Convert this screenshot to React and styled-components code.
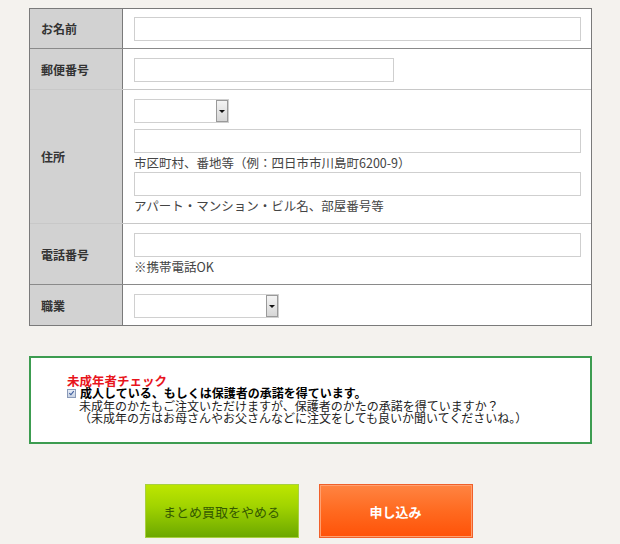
import styled, { createGlobalStyle } from 'styled-components';

const GlobalStyle = createGlobalStyle`
  html, body {
    margin: 0;
    padding: 0;
    background: #f4f2ee;
    font-family: "Noto Sans CJK JP", "Noto Sans", sans-serif;
    color: #333;
  }
`

const SelectBox = ({ width }) => (
    <Select width={width}>
        <Arrow><Tri/></Arrow>
    </Select>
)

export default function App() {
    return (
        <Page>
            <GlobalStyle/>
            <Form>
                <Row>
                    <Label>お名前</Label>
                    <Cell first><Input/></Cell>
                </Row>
                <Row>
                    <Label>郵便番号</Label>
                    <Cell><Input width="260px"/></Cell>
                </Row>
                <Row light>
                    <Label>住所</Label>
                    <Cell>
                        <SelectBox width="95px"/>
                        <Input mt="6px"/>
                        <Note>市区町村、番地等（例：四日市市川島町6200-9）</Note>
                        <Input/>
                        <Note>アパート・マンション・ビル名、部屋番号等</Note>
                    </Cell>
                </Row>
                <Row light>
                    <Label>電話番号</Label>
                    <Cell>
                        <Input/>
                        <Note>※携帯電話OK</Note>
                    </Cell>
                </Row>
                <Row>
                    <Label>職業</Label>
                    <Cell><SelectBox width="145px"/></Cell>
                </Row>
            </Form>

            <CheckBox>
                <CheckTitle>未成年者チェック</CheckTitle>
                <CheckLine>
                    <Tick>
                        <svg width="8" height="8" viewBox="0 0 8 8">
                            <path d="M1.5 4.2 L3.3 6 L6.6 1.8" stroke="#3f5f9f" strokeWidth="1.3" fill="none"/>
                        </svg>
                    </Tick>
                    <strong>成人している、もしくは保護者の承諾を得ています。</strong>
                </CheckLine>
                <SubLine>未成年のかたもご注文いただけますが、保護者のかたの承諾を得ていますか？</SubLine>
                <SubLine>（未成年の方はお母さんやお父さんなどに注文をしても良いか聞いてくださいね。）</SubLine>
            </CheckBox>

            <Buttons>
                <GreenBtn>まとめ買取をやめる</GreenBtn>
                <OrangeBtn>申し込み</OrangeBtn>
            </Buttons>
        </Page>
    )
}

const Page = styled.div`
  padding: 8px 28px 6px 29px;
  width: 563px;
`

const Form = styled.div`
  border: 1px solid #7a7a7a;
  background: #fff;
`

const Row = styled.div`
  display: grid;
  grid-template-columns: 93px 1fr;
  border-top: 1px solid ${p => p.light ? '#c8c8c8' : '#8a8a8a'};
  &:first-child {
    border-top: none;
  }
`

const Label = styled.div`
  background: #d2d2d2;
  border-right: 1px solid #7a7a7a;
  display: flex;
  align-items: center;
  padding-left: 11px;
  font-size: 12px;
  font-weight: bold;
  color: #333;
`

const Cell = styled.div`
  padding: ${p => p.first ? '8px' : '9px'} 10px 7px 11px;
  display: flex;
  flex-direction: column;
  align-items: flex-start;
`

const Input = styled.div`
  box-sizing: border-box;
  width: ${p => p.width || '100%'};
  height: 24px;
  border: 1px solid #cfcfcf;
  background: #fff;
  margin-top: ${p => p.mt || '0'};
`

const Note = styled.div`
  font-size: 12.5px;
  line-height: 17px;
  color: #444;
  margin: 1px 0;
  &:last-child {
    margin-bottom: 2px;
  }
`

const Select = styled.div`
  box-sizing: border-box;
  width: ${p => p.width};
  height: 24px;
  border: 1px solid #d0d0d0;
  background: #fff;
  display: flex;
  justify-content: flex-end;
`

const Arrow = styled.span`
  box-sizing: border-box;
  width: 12px;
  height: 22px;
  border: 1px solid #9a9a9a;
  background: linear-gradient(#f4f4f4, #d6d6d6);
  display: flex;
  align-items: center;
  justify-content: center;
`

const Tri = styled.span`
  width: 0;
  height: 0;
  border-left: 3px solid transparent;
  border-right: 3px solid transparent;
  border-top: 3px solid #111;
`

const CheckBox = styled.div`
  margin-top: 30px;
  border: 2px solid #3c9c50;
  background: #fff;
  height: 88px;
  box-sizing: border-box;
  padding: 16px 0 0 36px;
  font-size: 12px;
  line-height: 12.5px;
  color: #222;
`

const CheckTitle = styled.div`
  color: #e8141c;
  font-weight: bold;
  font-size: 12.5px;
  line-height: 13px;
`

const CheckLine = styled.div`
  display: flex;
  align-items: center;
  gap: 4px;
  color: #000;
  line-height: 12.5px;
`

const Tick = styled.span`
  box-sizing: border-box;
  width: 9px;
  height: 9px;
  border: 1px solid #8a9ab8;
  background: linear-gradient(#e6ecf6, #c8d2e2);
  display: flex;
  align-items: center;
  justify-content: center;
`

const SubLine = styled.div`
  padding-left: 12px;
  line-height: 12.5px;
`

const Buttons = styled.div`
  display: flex;
  justify-content: center;
  gap: 20px;
  margin-top: 40px;
  padding-right: 4px;
`

const BaseBtn = styled.button`
  box-sizing: border-box;
  width: 154px;
  height: 54px;
  font-family: "Noto Sans CJK JP", sans-serif;
  font-size: 13px;
  cursor: pointer;
`

const GreenBtn = styled(BaseBtn)`
  border: 1px solid #a8d040;
  background: linear-gradient(#bde600 0%, #a2d400 40%, #6ca800 100%);
  color: #355a00;
`

const OrangeBtn = styled(BaseBtn)`
  border: 1px solid #f0602a;
  box-shadow: inset 0 0 0 1px #ffa070;
  background: linear-gradient(#ff8442 0%, #ff6a20 50%, #ff5208 100%);
  color: #fff;
  font-weight: bold;
`
